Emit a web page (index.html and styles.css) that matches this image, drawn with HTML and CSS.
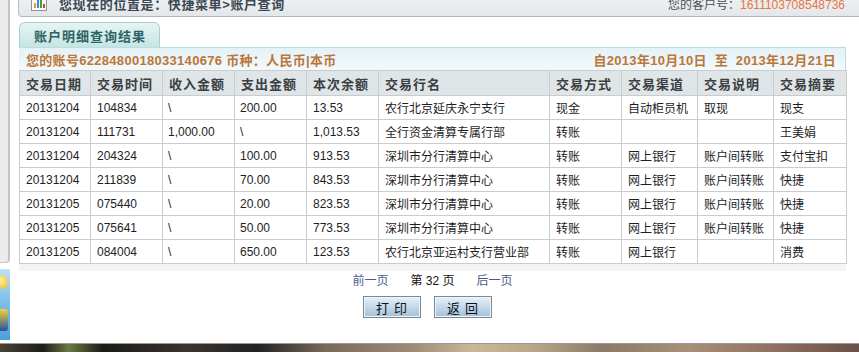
FILE: index.html
```html
<!DOCTYPE html>
<html lang="zh-CN">
<head>
<meta charset="utf-8">
<title>账户明细查询结果</title>
<link rel="stylesheet" href="styles.css">
</head>
<body>
<div class="screen">
  <div class="main">
    <div class="side">
      <div class="side-panel"></div>
      <div class="side-img"><span class="coin"></span><span class="glyph"></span></div>
    </div>
    <div class="content">
      <div class="topbar">
        <svg class="crumb-icon" width="16" height="16" viewBox="0 0 16 16">
          <rect x="0.5" y="0.5" width="15" height="15" fill="#fbfbfb" stroke="#8c949a"/>
          <rect x="3" y="8" width="2" height="5" fill="#e0a020"/>
          <rect x="6" y="5" width="2" height="8" fill="#3a8ad0"/>
          <rect x="9" y="3" width="2" height="10" fill="#3aa040"/>
          <rect x="12" y="9" width="2" height="4" fill="#d04030"/>
        </svg>
        <span class="crumb">您现在的位置是：快捷菜单&gt;账户查询</span>
        <span class="cust">您的客户号：<em>1611103708548736</em></span>
      </div>
      <div class="tabs"><div class="tab">账户明细查询结果</div></div>
      <div class="panel">
        <div class="acct">
          <span>您的账号6228480018033140676 币种：人民币|本币</span>
          <span>自2013年10月10日&nbsp;&nbsp;至&nbsp;&nbsp;2013年12月21日</span>
        </div>
        <table class="grid">
          <colgroup>
            <col class="w71"><col class="w72"><col class="w72"><col class="w72"><col class="w72">
            <col class="w171"><col class="w72"><col class="w76"><col class="w76"><col class="w73">
          </colgroup>
          <thead>
            <tr><th>交易日期</th><th>交易时间</th><th>收入金额</th><th>支出金额</th><th>本次余额</th><th>交易行名</th><th>交易方式</th><th>交易渠道</th><th>交易说明</th><th>交易摘要</th></tr>
          </thead>
          <tbody>
            <tr><td>20131204</td><td>104834</td><td>\</td><td>200.00</td><td>13.53</td><td>农行北京延庆永宁支行</td><td>现金</td><td>自动柜员机</td><td>取现</td><td>现支</td></tr>
            <tr><td>20131204</td><td>111731</td><td>1,000.00</td><td>\</td><td>1,013.53</td><td>全行资金清算专属行部</td><td>转账</td><td></td><td></td><td>王美娟</td></tr>
            <tr><td>20131204</td><td>204324</td><td>\</td><td>100.00</td><td>913.53</td><td>深圳市分行清算中心</td><td>转账</td><td>网上银行</td><td>账户间转账</td><td>支付宝扣</td></tr>
            <tr><td>20131204</td><td>211839</td><td>\</td><td>70.00</td><td>843.53</td><td>深圳市分行清算中心</td><td>转账</td><td>网上银行</td><td>账户间转账</td><td>快捷</td></tr>
            <tr><td>20131205</td><td>075440</td><td>\</td><td>20.00</td><td>823.53</td><td>深圳市分行清算中心</td><td>转账</td><td>网上银行</td><td>账户间转账</td><td>快捷</td></tr>
            <tr><td>20131205</td><td>075641</td><td>\</td><td>50.00</td><td>773.53</td><td>深圳市分行清算中心</td><td>转账</td><td>网上银行</td><td>账户间转账</td><td>快捷</td></tr>
            <tr><td>20131205</td><td>084004</td><td>\</td><td>650.00</td><td>123.53</td><td>农行北京亚运村支行营业部</td><td>转账</td><td>网上银行</td><td></td><td>消费</td></tr>
          </tbody>
        </table>
        <div class="panel-foot"></div>
        <div class="pager">
          <a class="plink">前一页</a>
          <span class="pnum">第 32 页</span>
          <a class="plink">后一页</a>
        </div>
        <div class="btns">
          <button class="btn">打 印</button>
          <button class="btn">返 回</button>
        </div>
      </div>
    </div>
  </div>
  <div class="taskbar"></div>
</div>
</body>
</html>
```
FILE: styles.css
```css
* { box-sizing: border-box; }
html, body { margin: 0; padding: 0; }
body {
  width: 859px;
  height: 352px;
  overflow: hidden;
  background: #fff;
  font-family: "Liberation Sans", "Noto Sans CJK SC", sans-serif;
  font-size: 12px;
  color: #222;
}
.screen { display: flex; flex-direction: column; height: 352px; }
.main { flex: 1; display: flex; min-height: 0; }

.side { width: 10px; display: flex; flex-direction: column; }
.side-panel {
  height: 263px;
  background: #ebebeb;
  border-right: 2px solid #c4c4c4;
  border-bottom: 1px solid #c4c4c4;
  border-bottom-right-radius: 4px;
}
.side-img {
  margin-top: 6px;
  height: 71px;
  position: relative;
  overflow: hidden;
  background: linear-gradient(180deg, #bfe2f6 0%, #7cc0ea 45%, #4c9fdc 100%);
}
.side-img .coin {
  position: absolute; left: -4px; top: 6px;
  width: 12px; height: 14px; border-radius: 50%;
  background: radial-gradient(circle at 40% 40%, #fff3a0, #e8b820);
}
.side-img .glyph {
  position: absolute; left: -3px; top: 40px;
  width: 11px; height: 22px; border-radius: 3px;
  background: linear-gradient(180deg, #f2d23a, #2a4f9c);
}

.content { flex: 1; padding-left: 8px; min-width: 0; }

.topbar {
  margin-top: -10px;
  height: 27px;
  display: flex;
  align-items: center;
  padding: 0 14px 0 12px;
  background: linear-gradient(180deg, #f4f6f7 0%, #e3e7ea 100%);
  border-left: 1px solid #b8bdc1;
  border-bottom: 1px solid #b2b7bb;
  border-bottom-left-radius: 4px;
}
.crumb-icon { flex: none; }
.crumb {
  margin-left: 12px;
  font-size: 13px;
  font-weight: bold;
  letter-spacing: 0.6px;
  color: #3c4853;
}
.cust { margin-left: auto; color: #4a4f55; font-size: 12px; }
.cust em { font-style: normal; color: #e4773f; font-size: 12px; }

.tabs { margin-top: 5px; padding-left: 1px; display: flex; }
.tab {
  width: 141px;
  height: 25px;
  padding-left: 14px;
  display: flex; align-items: center;
  background: linear-gradient(180deg, #e6f4f3 0%, #c6e5e2 100%);
  border: 1px solid #a8d0d0;
  border-bottom: none;
  border-radius: 6px 6px 0 0;
  font-size: 13px;
  font-weight: bold;
  letter-spacing: 1px;
  color: #2c6466;
}

.panel { margin-left: 1px; margin-right: 13px; }
.acct {
  height: 23px;
  display: flex; align-items: center; justify-content: space-between;
  padding: 0 9px 0 7px;
  background: linear-gradient(180deg, #e4f2f7 0%, #f3f9fb 100%);
  border-top: 1px solid #bcdbe4;
  border-right: 1px solid #bcdbe4;
  font-size: 13px;
  font-weight: bold;
  letter-spacing: 0.3px;
  color: #bb763a;
}

.grid {
  width: 827px;
  border-collapse: collapse;
  table-layout: fixed;
}
.w71 { width: 71px; } .w72 { width: 72px; } .w73 { width: 73px; }
.w76 { width: 76px; } .w171 { width: 171px; }
.grid th, .grid td {
  border: 1px solid #c9cccf;
  height: 24px;
  padding: 0 0 0 6px;
  text-align: left;
  white-space: nowrap;
  overflow: hidden;
}
.grid th {
  background: #e0e5e8;
  font-size: 13px;
  font-weight: bold;
  letter-spacing: 1px;
  color: #3a3f44;
  height: 25px;
}
.grid td { background: #fff; color: #1e1e1e; font-size: 12px; }
.grid td:nth-child(3), .grid td:nth-child(4) { padding-left: 5px; }

.panel-foot { height: 7px; background: #f2f4f5; }

.pager {
  height: 16px;
  display: flex; justify-content: center; align-items: center;
  gap: 22px;
  font-size: 12px;
}
.plink { color: #4a5c8c; text-decoration: none; }
.pnum { color: #111; }

.btns {
  margin-top: 9px;
  display: flex; justify-content: center; gap: 13px;
  padding-right: 10px;
}
.btn {
  width: 58px; height: 22px;
  padding: 0;
  border: 1px solid #7b8994;
  box-shadow: inset 0 0 0 1px #eef4f9;
  background: linear-gradient(180deg, #e9f1f8 0%, #c3d8ea 50%, #a2c1da 100%);
  font-family: "Noto Sans CJK SC", sans-serif;
  font-size: 13px;
  color: #111;
  letter-spacing: 1px;
}

.taskbar {
  height: 9px;
  border-top: 1px solid #9a9a9a;
  background: linear-gradient(90deg, #4a4038 0%, #1e1c1a 5%, #6a7a40 8%, #1c1a18 12%, #3a3430 22%, #222 30%, #7a6a5a 38%, #a08a76 48%, #c8b898 55%, #b8a888 62%, #8a7a66 70%, #a89078 80%, #907060 90%, #6a5048 100%);
}
```
